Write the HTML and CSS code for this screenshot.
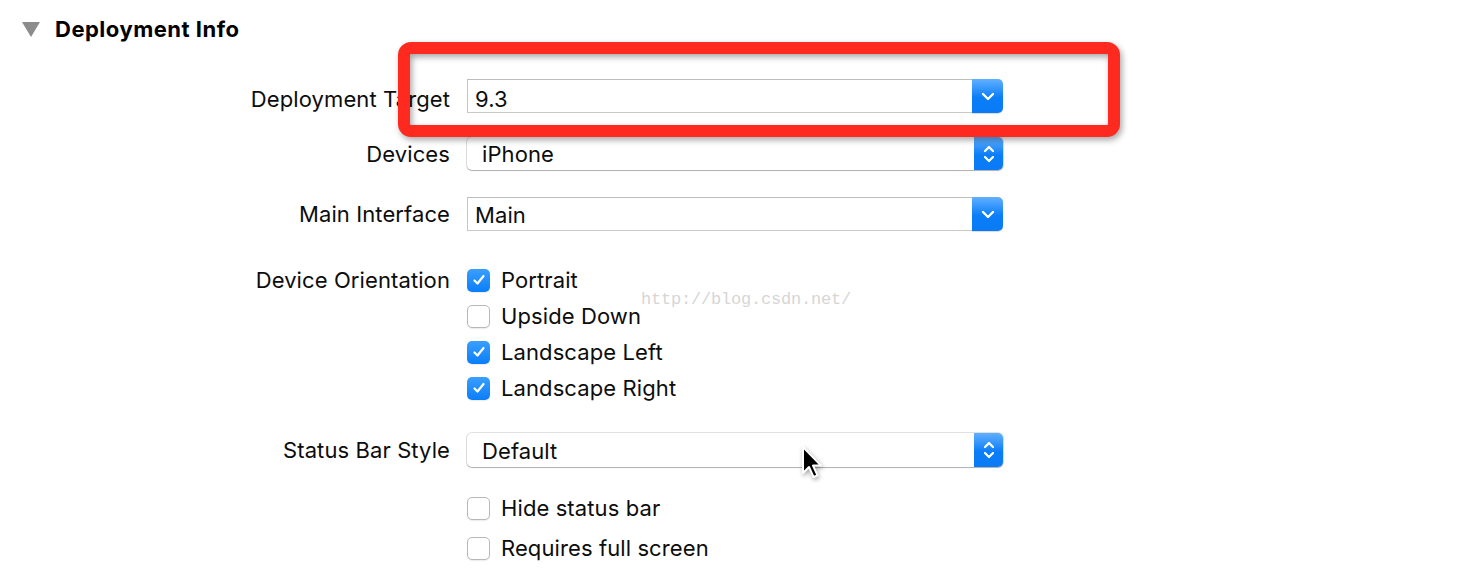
FILE: index.html
```html
<!DOCTYPE html>
<html>
<head>
<meta charset="utf-8">
<link rel="stylesheet" href="styles.css">
</head>
<body>
<div class="page">
  <div class="header">
    <span class="disclosure"></span>
    <span class="title">Deployment Info</span>
  </div>

  <div class="row row-target">
    <div class="label label-low">Deployment Target</div>
    <div class="combo">
      <div class="combo-field field-low">9.3</div>
      <div class="combo-btn">
        <svg width="14" height="9" viewBox="0 0 14 9"><path d="M2 2 L7 7 L12 2" fill="none" stroke="#fff" stroke-width="2.4" stroke-linecap="round" stroke-linejoin="round"/></svg>
      </div>
    </div>
  </div>

  <div class="row row-devices">
    <div class="label">Devices</div>
    <div class="popup">
      <div class="popup-field">iPhone</div>
      <div class="popup-btn">
        <svg width="12" height="20" viewBox="0 0 12 20"><path d="M2 7 L6 3 L10 7 M2 13 L6 17 L10 13" fill="none" stroke="#fff" stroke-width="2.2" stroke-linecap="round" stroke-linejoin="round"/></svg>
      </div>
    </div>
  </div>

  <div class="row row-main">
    <div class="label">Main Interface</div>
    <div class="combo">
      <div class="combo-field">Main</div>
      <div class="combo-btn">
        <svg width="14" height="9" viewBox="0 0 14 9"><path d="M2 2 L7 7 L12 2" fill="none" stroke="#fff" stroke-width="2.4" stroke-linecap="round" stroke-linejoin="round"/></svg>
      </div>
    </div>
  </div>

  <div class="row row-orient">
    <div class="label label-top">Device Orientation</div>
    <div class="checks">
      <div class="check"><span class="box on"><svg width="14" height="12" viewBox="0 0 14 12"><path d="M2.5 6.5 L5.5 9.5 L11.5 2" fill="none" stroke="#fff" stroke-width="2.2" stroke-linecap="round" stroke-linejoin="round"/></svg></span><span>Portrait</span></div>
      <div class="check"><span class="box"></span><span>Upside Down</span></div>
      <div class="check"><span class="box on"><svg width="14" height="12" viewBox="0 0 14 12"><path d="M2.5 6.5 L5.5 9.5 L11.5 2" fill="none" stroke="#fff" stroke-width="2.2" stroke-linecap="round" stroke-linejoin="round"/></svg></span><span>Landscape Left</span></div>
      <div class="check"><span class="box on"><svg width="14" height="12" viewBox="0 0 14 12"><path d="M2.5 6.5 L5.5 9.5 L11.5 2" fill="none" stroke="#fff" stroke-width="2.2" stroke-linecap="round" stroke-linejoin="round"/></svg></span><span>Landscape Right</span></div>
    </div>
  </div>

  <div class="row row-status">
    <div class="label">Status Bar Style</div>
    <div class="popup popup-tall">
      <div class="popup-field">Default</div>
      <div class="popup-btn">
        <svg width="12" height="20" viewBox="0 0 12 20"><path d="M2 7 L6 3 L10 7 M2 13 L6 17 L10 13" fill="none" stroke="#fff" stroke-width="2.2" stroke-linecap="round" stroke-linejoin="round"/></svg>
      </div>
    </div>
  </div>

  <div class="row row-extra">
    <div class="label"></div>
    <div class="checks checks-wide">
      <div class="check"><span class="box"></span><span>Hide status bar</span></div>
      <div class="check"><span class="box"></span><span>Requires full screen</span></div>
    </div>
  </div>

  <div class="watermark">http://blog.csdn.net/</div>
  <div class="highlight"></div>
  <svg class="cursor" width="24" height="38" viewBox="0 0 24 38">
    <path d="M2 1 L2 27 L8 21 L12.5 31 L16.5 29.3 L12 19.6 L20 19.6 Z" fill="#000" stroke="#fff" stroke-width="2" stroke-linejoin="round"/>
  </svg>
</div>
</body>
</html>
```

FILE: styles.css
```css
html, body {
  margin: 0;
  padding: 0;
  background: #ffffff;
}

.page {
  position: relative;
  width: 1472px;
  height: 582px;
  overflow: hidden;
  font-family: "Inter", "Noto Sans", sans-serif;
  font-size: 22px;
  letter-spacing: 0.1px;
  color: #0d0d0d;
}

.header {
  display: flex;
  align-items: center;
  height: 58px;
  padding-left: 22px;
}

.disclosure {
  width: 0;
  height: 0;
  border-left: 9px solid transparent;
  border-right: 9px solid transparent;
  border-top: 15px solid #8c8c8c;
  margin-top: 1px;
}

.title {
  margin-left: 15px;
  font-weight: 700;
  font-size: 22px;
  letter-spacing: 0.5px;
  color: #000;
}

.row {
  display: flex;
  align-items: center;
}

.label {
  flex: none;
  width: 467px;
  text-align: right;
  padding-right: 17px;
  box-sizing: border-box;
  white-space: nowrap;
}

.label-low { padding-top: 5px; }

.label-top {
  align-self: flex-start;
  line-height: 36px;
}

.row-target { margin-top: 21px; }
.row-devices { margin-top: 24px; }
.row-main { margin-top: 27px; }
.row-orient { margin-top: 31px; align-items: flex-start; }
.row-status { margin-top: 27px; }
.row-extra { margin-top: 21px; }

/* combo box */
.combo {
  display: flex;
  width: 536px;
  height: 34px;
}

.combo-field {
  flex: 1;
  border: 1px solid #c9c9c9;
  border-right: none;
  border-top-color: #bdbdbd;
  background: #fff;
  display: flex;
  align-items: center;
  padding-left: 7px;
  padding-top: 2px;
  box-sizing: border-box;
}

.field-low { padding-top: 5px; }

.combo-btn {
  width: 31px;
  flex: none;
  border-radius: 0 5px 5px 0;
  background: linear-gradient(#62b0ff, #0a7df8 55%, #0a7bf5);
  display: flex;
  align-items: center;
  justify-content: center;
  box-shadow: 0 1px 1px rgba(0, 0, 0, 0.15);
}

/* popup button */
.popup {
  display: flex;
  width: 536px;
  height: 33px;
  border-radius: 5px;
  background: #fff;
  box-shadow: 0 0 0 1px rgba(0, 0, 0, 0.12), 0 1px 1px rgba(0, 0, 0, 0.22);
}

.popup-tall { height: 34px; }

.popup-field {
  flex: 1;
  display: flex;
  align-items: center;
  padding-left: 15px;
  padding-top: 1px;
}

.popup-btn {
  width: 29px;
  flex: none;
  border-radius: 0 5px 5px 0;
  background: linear-gradient(#62b0ff, #0a7df8 55%, #0a7bf5);
  display: flex;
  align-items: center;
  justify-content: center;
}

/* checkboxes */
.checks {
  display: flex;
  flex-direction: column;
}

.check {
  display: flex;
  align-items: center;
  height: 36px;
}

.checks-wide .check { height: 40px; }

.box {
  width: 23px;
  height: 23px;
  border-radius: 5px;
  box-sizing: border-box;
  border: 1px solid #b8b8b8;
  background: #fff;
  box-shadow: 0 1px 1px rgba(0, 0, 0, 0.08);
  margin-right: 11px;
  display: flex;
  align-items: center;
  justify-content: center;
  flex: none;
}

.box.on {
  border: none;
  background: linear-gradient(#3aa0ff, #0a7df8);
}

/* overlays */
.watermark {
  position: absolute;
  left: 641px;
  top: 290px;
  font-family: "Liberation Mono", monospace;
  font-size: 17px;
  color: #d6d6d6;
  letter-spacing: -0.2px;
}

.highlight {
  position: absolute;
  left: 398px;
  top: 42px;
  width: 722px;
  height: 95px;
  box-sizing: border-box;
  border: 12px solid #fe2a20;
  border-radius: 13px;
  filter: drop-shadow(2px 3px 3px rgba(0, 0, 0, 0.35));
}

.cursor {
  position: absolute;
  left: 801px;
  top: 446px;
  filter: drop-shadow(1px 2px 2px rgba(0, 0, 0, 0.35));
}
```
